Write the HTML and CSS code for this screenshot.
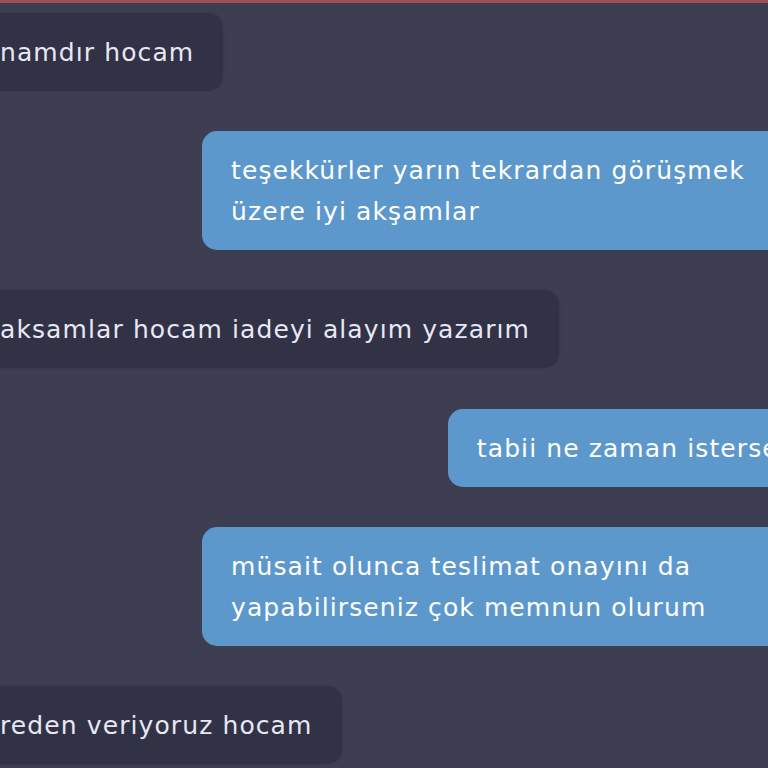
FILE: index.html
```html
<!DOCTYPE html>
<html lang="tr">
<head>
  <meta charset="UTF-8">
  <meta name="viewport" content="width=device-width, initial-scale=1.0">
  <title>Mesajlar</title>
  <link rel="stylesheet" href="styles.css">
</head>
<body>
  <main class="chat">
    <div class="msg in">namdır hocam</div>
    <div class="msg out">teşekkürler yarın tekrardan görüşmek üzere iyi akşamlar</div>
    <div class="msg in">aksamlar hocam iadeyi alayım yazarım</div>
    <div class="msg out">tabii ne zaman isterseniz</div>
    <div class="msg out">müsait olunca teslimat onayını da yapabilirseniz çok memnun olurum</div>
    <div class="msg in">reden veriyoruz hocam</div>
  </main>
</body>
</html>
```

FILE: styles.css
```css
html, body {
  height: 100%;
}

body {
  margin: 0;
  overflow: hidden;
  background-color: #3e3e53;
  border-top: 3px solid #9c5058;
  box-sizing: border-box;
  font-family: "DejaVu Sans", sans-serif;
  font-size: 25px;
  letter-spacing: 1.1px;
}

.chat {
  display: flex;
  flex-direction: column;
  gap: 40.2px;
  padding-top: 10px;
  margin: 0 -79px 0 -29px;
}

.msg {
  padding: 19px 29px 18px;
  line-height: 41px;
  border-radius: 15px;
}

.msg.in {
  align-self: flex-start;
  background: #323246;
  color: #e8e8f4;
  box-shadow: 0 0 3px rgba(0, 0, 0, 0.15);
}

.msg.out {
  align-self: flex-end;
  max-width: 645px;
  box-sizing: border-box;
  background: #5d98cd;
  color: #fff;
}
```
